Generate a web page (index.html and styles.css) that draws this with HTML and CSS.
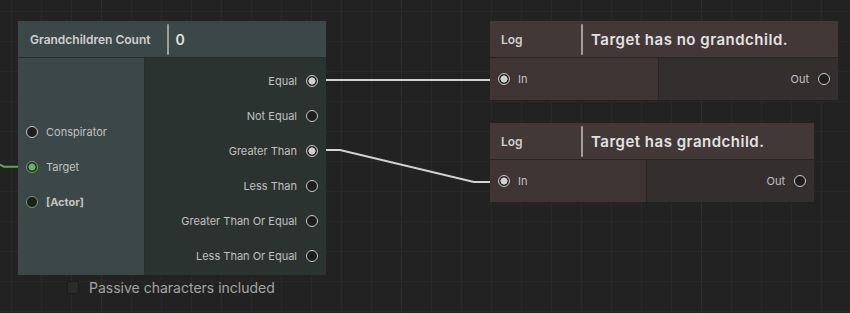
FILE: index.html
```html
<!DOCTYPE html>
<html>
<head>
<meta charset="utf-8">
<link rel="stylesheet" href="styles.css">
</head>
<body>
<div class="canvas">
  <svg class="wires" width="850" height="313" viewBox="0 0 850 313">
    <path class="wire green" d="M0 164.5 L4 166.8 L18 166.8"/>
    <path class="wire" d="M326 80 L490 80"/>
    <path class="wire" d="M326 150 L340 150 L474 182 L490 182"/>
  </svg>

  <div class="node-wrap compare">
    <div class="node">
      <div class="node-header">
        <span class="node-title">Grandchildren Count</span>
        <span class="field-sep"></span>
        <span class="field-value num">0</span>
      </div>
      <div class="node-body">
        <div class="inputs">
          <div class="port"><span class="dot"></span><span class="label">Conspirator</span></div>
          <div class="port"><span class="dot green linked"></span><span class="label">Target</span></div>
          <div class="port"><span class="dot green"></span><span class="label strong">[Actor]</span></div>
        </div>
        <div class="outputs">
          <div class="port out"><span class="label">Equal</span><span class="dot linked"></span></div>
          <div class="port out"><span class="label">Not Equal</span><span class="dot"></span></div>
          <div class="port out"><span class="label">Greater Than</span><span class="dot linked"></span></div>
          <div class="port out"><span class="label">Less Than</span><span class="dot"></span></div>
          <div class="port out"><span class="label">Greater Than Or Equal</span><span class="dot"></span></div>
          <div class="port out"><span class="label">Less Than Or Equal</span><span class="dot"></span></div>
        </div>
      </div>
    </div>
    <label class="toggle"><span class="checkbox"></span><span class="toggle-text">Passive characters included</span></label>
  </div>

  <div class="node-wrap log log-a">
    <div class="node">
      <div class="node-header">
        <span class="node-title log-title">Log</span>
        <span class="field-sep"></span>
        <span class="field-value">Target has no grandchild.</span>
      </div>
      <div class="node-body log-body">
        <div class="log-in"><div class="port"><span class="dot linked"></span><span class="label">In</span></div></div>
        <div class="log-out"><div class="port out"><span class="label">Out</span><span class="dot"></span></div></div>
      </div>
    </div>
  </div>

  <div class="node-wrap log log-b">
    <div class="node">
      <div class="node-header">
        <span class="node-title log-title">Log</span>
        <span class="field-sep"></span>
        <span class="field-value">Target has grandchild.</span>
      </div>
      <div class="node-body log-body">
        <div class="log-in"><div class="port"><span class="dot linked"></span><span class="label">In</span></div></div>
        <div class="log-out"><div class="port out"><span class="label">Out</span><span class="dot"></span></div></div>
      </div>
    </div>
  </div>
</div>
</body>
</html>
```

FILE: styles.css
```css
* { box-sizing: border-box; }
html, body { margin: 0; padding: 0; }
body {
  width: 850px;
  height: 313px;
  overflow: hidden;
  background: #222222;
  font-family: Inter, "Noto Sans", sans-serif;
}
.canvas {
  position: relative;
  width: 850px;
  height: 313px;
  background-color: #222222;
  background-image:
    linear-gradient(to right, #2d2d2d 1px, transparent 1px),
    linear-gradient(to right, #282828 1px, transparent 1px),
    linear-gradient(to bottom, #282828 1px, transparent 1px);
  background-size: 300px 300px, 30px 30px, 30px 30px;
  background-position: 101px 0, 11px 0, 0 11px;
}
.wires {
  position: absolute;
  left: 0;
  top: 0;
}
.wire {
  fill: none;
  stroke: #d2d2d2;
  stroke-width: 2;
}
.wire.green { stroke: #5ea65e; }

.node-wrap { position: absolute; }
.compare { left: 18px; top: 21px; width: 308px; }
.log-a { left: 490px; top: 21px; width: 348px; }
.log-b { left: 490px; top: 123px; width: 324px; }

.node-header {
  height: 37px;
  display: flex;
  align-items: center;
  background: #3c4847;
  border-bottom: 1px solid #252b2a;
}
.log .node-header {
  background: #433838;
  border-bottom-color: #2a2424;
}
.node-title {
  padding-left: 12px;
  padding-right: 16px;
  font-size: 12px;
  font-weight: 600;
  color: #d0d0d0;
}
.log-title {
  width: 91px;
  padding-left: 11px;
  padding-right: 0;
}
.field-sep {
  width: 2px;
  height: 31px;
  background: #9e9e9e;
  border-radius: 1px;
}
.field-value {
  margin-left: 8px;
  font-size: 15px;
  font-weight: 600;
  color: #e2e2e2;
  letter-spacing: 0.5px;
}
.field-value.num { margin-left: 7px; font-size: 14px; letter-spacing: 0; }

.node-body { display: flex; }
.inputs {
  width: 127px;
  height: 217px;
  background: #3c4847;
  border-right: 1px solid #28302f;
  display: flex;
  flex-direction: column;
  justify-content: center;
  padding-top: 1px;
}
.outputs {
  flex: 1;
  height: 217px;
  background: #2b3331;
  padding-top: 5px;
  display: flex;
  flex-direction: column;
}
.port {
  height: 35px;
  display: flex;
  align-items: center;
  gap: 8px;
  padding: 0 8px;
}
.port.out {
  justify-content: flex-end;
  gap: 9px;
}
.label {
  font-size: 11px;
  color: #c0c0c0;
}
.label.strong { font-weight: 700; color: #c4c4c4; }
.dot {
  flex: none;
  width: 12px;
  height: 12px;
  border-radius: 50%;
  border: 1.5px solid #c9c9c9;
  background: #1e1e1e;
}
.dot.linked {
  background: radial-gradient(circle, #d0d0d0 0 3.3px, #2a2a2a 3.8px);
}
.dot.green {
  border-color: #5ea65e;
  background: #1e1e1e;
}
.dot.green.linked {
  background: radial-gradient(circle, #66b066 0 3.3px, #2a2a2a 3.8px);
}

.log-body { height: 42px; }
.log-in {
  flex: 1 1 auto;
  background: #3f3434;
  border-right: 1px solid #2a2424;
  display: flex;
  align-items: center;
}
.log-out {
  flex: 1 1 auto;
  background: #342f2f;
  display: flex;
  align-items: center;
  justify-content: flex-end;
}
.log-body .port { height: 42px; }

.toggle {
  display: flex;
  align-items: center;
  gap: 10px;
  margin-top: 4px;
  padding-left: 49px;
}
.checkbox {
  width: 12px;
  height: 13px;
  background: #2a2a2a;
  border: 1px solid #1c1c1c;
  border-radius: 2px;
}
.toggle-text {
  font-size: 14px;
  color: #a4a4a4;
}
```
